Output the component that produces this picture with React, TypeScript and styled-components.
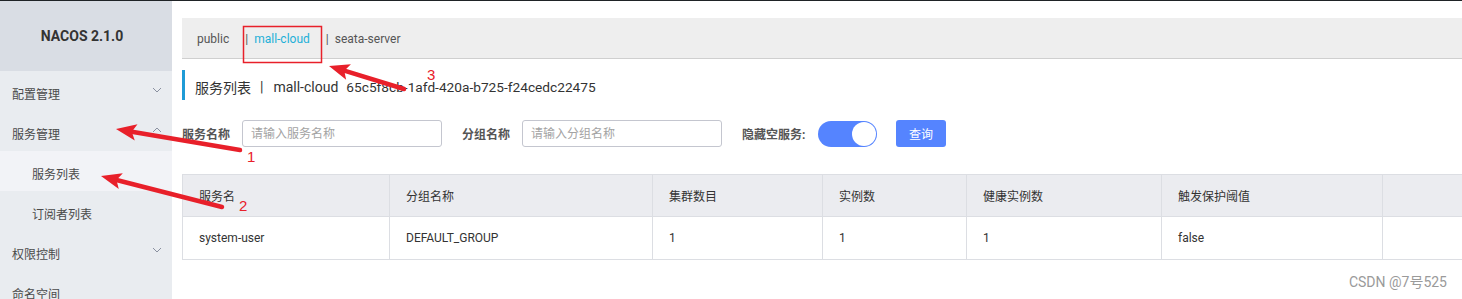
import React from "react";
import styled, { createGlobalStyle } from "styled-components";

const Global = createGlobalStyle`
  html, body { margin: 0; padding: 0; background: #fff; overflow: hidden; }
  body { font-family: Roboto, "Noto Sans CJK SC", sans-serif; color: #333; }
  * { box-sizing: border-box; }
`;

const Page = styled.div`
  position: relative;
  display: flex;
  width: 1462px;
  height: 299px;
  border-top: 1px solid #1f2326;
  overflow: hidden;
`;

const Sidebar = styled.aside`
  flex: 0 0 172px;
  display: flex;
  flex-direction: column;
  background: #e9ecf0;
  overflow: hidden;
`;

const Brand = styled.div`
  flex: 0 0 70px;
  background: #d9dde4;
  display: flex;
  align-items: center;
  justify-content: center;
  font-size: 14px;
  font-weight: bold;
  color: #333;
  padding: 0 8px 0 0;
`;

const MenuItem = styled.div<{ $sub?: boolean; $active?: boolean }>`
  flex: 0 0 40px;
  display: flex;
  align-items: center;
  justify-content: space-between;
  padding: 4px 10px 0 ${(p) => (p.$sub ? 32 : 12)}px;
  font-size: 12px;
  color: #4a4a4a;
  background: ${(p) => (p.$active ? "#f2f3f7" : "transparent")};
`;

const Chevron = ({ up }: { up?: boolean }) => (
  <svg width="10" height="6" viewBox="0 0 10 6" style={{ marginTop: -6 }}>
    <path
      d={up ? "M1 5 L5 1 L9 5" : "M1 1 L5 5 L9 1"}
      fill="none"
      stroke="#8a90a0"
      strokeWidth="1"
    />
  </svg>
);

const Main = styled.main`
  flex: 1;
  min-width: 0;
  padding: 17px 0 0 10px;
  display: flex;
  flex-direction: column;
  overflow: hidden;
`;

const TabBar = styled.div`
  flex: 0 0 41px;
  background: #eeeeee;
  border-bottom: 1px solid #cfcfcf;
  display: flex;
  align-items: center;
  padding: 1px 0 0 15px;
  font-size: 12px;
  color: #555;
`;

const Tab = styled.span<{ $active?: boolean }>`
  color: ${(p) => (p.$active ? "#1eb0d8" : "#555")};
`;

const Sep = styled.span`
  color: #555;
  margin: 0 6px 0 16px;
`;

const Title = styled.div`
  margin-top: 11px;
  flex: 0 0 30px;
  border-left: 3px solid #1f9bd6;
  padding: 3px 0 0 10px;
  display: flex;
  align-items: center;
  font-size: 14px;
  color: #333;
  white-space: nowrap;
`;

const TitleBar = styled.span`
  margin: 0 10px 0 9px;
`;

const TitleId = styled.span`
  margin-left: 8px;
  font-size: 13.7px;
`;

const Form = styled.div`
  margin-top: 20px;
  flex: 0 0 27px;
  display: flex;
  align-items: center;
`;

const Label = styled.span<{ $w: number }>`
  width: ${(p) => p.$w}px;
  font-size: 12px;
  font-weight: bold;
  color: #555;
`;

const Input = styled.input`
  width: 200px;
  height: 27px;
  border: 1px solid #c4c6cf;
  border-radius: 3px;
  padding: 0 8px;
  font-size: 12px;
  font-family: inherit;
  margin-right: 20px;
  &::placeholder { color: #a3a3a3; }
`;

const Switch = styled.div`
  width: 59px;
  height: 26px;
  border-radius: 13px;
  background: #5584ff;
  position: relative;
  margin-right: 19px;
`;

const Knob = styled.div`
  position: absolute;
  right: 1px;
  top: 1px;
  width: 24px;
  height: 24px;
  border-radius: 50%;
  background: #fff;
`;

const Button = styled.button`
  width: 50px;
  height: 27px;
  border: none;
  border-radius: 3px;
  background: #5584ff;
  color: #fff;
  font-size: 12px;
  font-family: inherit;
  padding: 0;
`;

const Table = styled.div`
  margin-top: 27px;
  width: 1320px;
  flex-shrink: 0;
  border: 1px solid #dcdee3;
  border-right: none;
`;

const Row = styled.div<{ $head?: boolean }>`
  display: grid;
  grid-template-columns: 207px 263px 170px 144px 195px 221px 1fr;
  height: 42px;
  background: ${(p) => (p.$head ? "#ebecf0" : "#fff")};
  border-bottom: ${(p) => (p.$head ? "1px solid #dcdee3" : "none")};
`;

const Cell = styled.div`
  display: flex;
  align-items: center;
  padding-left: 16px;
  font-size: 12px;
  color: #333;
  border-right: 1px solid #dcdee3;
  &:last-child { border-right: none; }
`;

const Watermark = styled.div`
  position: absolute;
  right: 15px;
  bottom: 8px;
  font-size: 14px;
  color: #9a9a9a;
`;

const Overlay = styled.svg`
  position: absolute;
  left: 0;
  top: 0;
  pointer-events: none;
`;

const Arrow = ({ x1, y1, x2, y2 }: { x1: number; y1: number; x2: number; y2: number }) => {
  const ang = Math.atan2(y2 - y1, x2 - x1);
  const len = 22;
  const w = 0.38;
  const ax = x2 - len * Math.cos(ang - w);
  const ay = y2 - len * Math.sin(ang - w);
  const bx = x2 - len * Math.cos(ang + w);
  const by = y2 - len * Math.sin(ang + w);
  const mx = x2 - 16 * Math.cos(ang);
  const my = y2 - 16 * Math.sin(ang);
  return (
    <g>
      <line x1={x1} y1={y1} x2={mx} y2={my} stroke="#e8202a" strokeWidth="4.5" strokeLinecap="round" />
      <polygon points={`${x2},${y2} ${ax},${ay} ${mx},${my} ${bx},${by}`} fill="#e8202a" />
    </g>
  );
};

const headers = ["服务名", "分组名称", "集群数目", "实例数", "健康实例数", "触发保护阈值", ""];
const values = ["system-user", "DEFAULT_GROUP", "1", "1", "1", "false", ""];

export default function App() {
  return (
    <>
      <Global />
      <Page>
        <Sidebar>
          <Brand>NACOS 2.1.0</Brand>
          <MenuItem>配置管理<Chevron /></MenuItem>
          <MenuItem>服务管理<Chevron up /></MenuItem>
          <MenuItem $sub $active>服务列表</MenuItem>
          <MenuItem $sub>订阅者列表</MenuItem>
          <MenuItem>权限控制<Chevron /></MenuItem>
          <MenuItem>命名空间</MenuItem>
        </Sidebar>
        <Main>
          <TabBar>
            <Tab>public</Tab>
            <Sep>|</Sep>
            <Tab $active>mall-cloud</Tab>
            <Sep>|</Sep>
            <Tab>seata-server</Tab>
          </TabBar>
          <Title>
            <span>服务列表</span>
            <TitleBar>|</TitleBar>
            <span>mall-cloud</span>
            <TitleId>65c5f8cb-1afd-420a-b725-f24cedc22475</TitleId>
          </Title>
          <Form>
            <Label $w={60}>服务名称</Label>
            <Input placeholder="请输入服务名称" />
            <Label $w={60}>分组名称</Label>
            <Input placeholder="请输入分组名称" />
            <Label $w={76}>隐藏空服务:</Label>
            <Switch><Knob /></Switch>
            <Button>查询</Button>
          </Form>
          <Table>
            <Row $head>
              {headers.map((h, i) => (
                <Cell key={i}>{h}</Cell>
              ))}
            </Row>
            <Row>
              {values.map((v, i) => (
                <Cell key={i}>{v}</Cell>
              ))}
            </Row>
          </Table>
        </Main>
        <Watermark>CSDN @7号525</Watermark>
        <Overlay width="1462" height="299" viewBox="0 0 1462 299">
          <rect x="243.5" y="25.5" width="78" height="36" fill="none" stroke="#e8202a" strokeWidth="1.5" />
          <Arrow x1={240} y1={149} x2={116} y2={128} />
          <Arrow x1={222} y1={206} x2={101} y2={175} />
          <Arrow x1={404} y1={88} x2={329} y2={65} />
          <text x="247" y="161" fill="#e8202a" fontSize="15" fontFamily="Liberation Sans, sans-serif">1</text>
          <text x="239" y="210" fill="#e8202a" fontSize="15" fontFamily="Liberation Sans, sans-serif">2</text>
          <text x="427" y="79" fill="#e8202a" fontSize="15" fontFamily="Liberation Sans, sans-serif">3</text>
        </Overlay>
      </Page>
    </>
  );
}
